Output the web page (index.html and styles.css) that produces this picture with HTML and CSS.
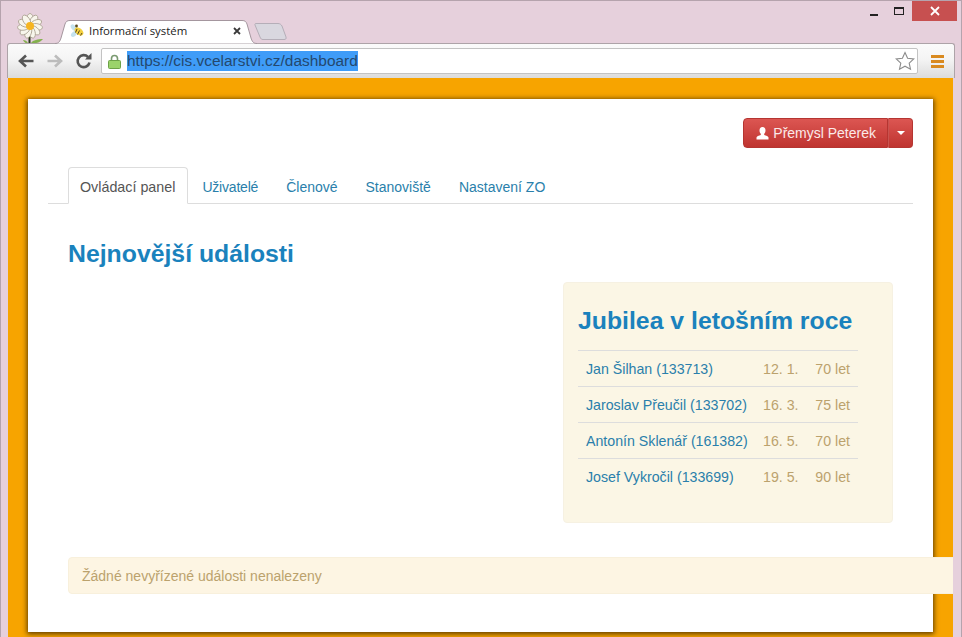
FILE: index.html
```html
<!DOCTYPE html>
<html lang="cs">
<head>
<meta charset="utf-8">
<title>Informační systém</title>
<link rel="stylesheet" href="styles.css">
</head>
<body>
<div class="window">
  <svg class="flower" width="36" height="32" viewBox="0 0 36 32">
    <path d="M17.500 24v8" stroke="#2c3a1c" stroke-width="2"/>
    <path d="M19 32c2-3 7-4 12-4-2 3-7 5-12 4zM16 32c-1-2-3-3-5-3 1 2 3 4 5 3z" fill="#84b04e"/>
    <g fill="#f8f6ec" stroke="#a89f8e" stroke-width=".8">
      <ellipse cx="18" cy="8.500" rx="3.300" ry="6"/>
      <ellipse cx="18" cy="8.500" rx="3.300" ry="6" transform="rotate(33 18 15)"/>
      <ellipse cx="18" cy="8.500" rx="3.300" ry="6" transform="rotate(66 18 15)"/>
      <ellipse cx="18" cy="8.500" rx="3.300" ry="6" transform="rotate(98 18 15)"/>
      <ellipse cx="18" cy="8.500" rx="3.300" ry="6" transform="rotate(131 18 15)"/>
      <ellipse cx="18" cy="8.500" rx="3.300" ry="6" transform="rotate(164 18 15)"/>
      <ellipse cx="18" cy="8.500" rx="3.300" ry="6" transform="rotate(196 18 15)"/>
      <ellipse cx="18" cy="8.500" rx="3.300" ry="6" transform="rotate(229 18 15)"/>
      <ellipse cx="18" cy="8.500" rx="3.300" ry="6" transform="rotate(262 18 15)"/>
      <ellipse cx="18" cy="8.500" rx="3.300" ry="6" transform="rotate(295 18 15)"/>
      <ellipse cx="18" cy="8.500" rx="3.300" ry="6" transform="rotate(328 18 15)"/>
    </g>
    <circle cx="18" cy="15" r="4" fill="#f6b520"/>
  </svg>
  <div class="tabstrip">
    <div class="tab">
      <svg class="tab-shape" width="202" height="24" viewBox="0 0 202 24">
        <path d="M0 23.500C4 23.500 5 21 6 18L10 4C11 1.500 12 .5 15 .5H187C190 .5 191 1.500 192 4L196 18C197 21 198 23.500 202 23.500" fill="#fff" stroke="#a4969e"/>
      </svg>
      <svg class="bee" width="15" height="15" viewBox="0 0 15 15">
        <ellipse cx="3.500" cy="4.500" rx="3.500" ry="2.200" fill="#c4e2ee" transform="rotate(50 3.500 4.500)"/>
        <ellipse cx="4" cy="11" rx="3.500" ry="2.200" fill="#c4e2ee" transform="rotate(-40 4 11)"/>
        <ellipse cx="9" cy="8.500" rx="5" ry="3.400" fill="#f3d040" transform="rotate(40 9 8.500)"/>
        <path d="M7 6l-1.500 3.500M9.500 7.500l-2 4M12 10l-1.500 2.500" stroke="#5a4a20" stroke-width="1"/>
        <circle cx="6.500" cy="3" r="1.400" fill="#5a4a20"/>
      </svg>
      <span class="tab-title">Informační systém</span>
      <svg class="tab-close" width="10" height="10" viewBox="0 0 10 10"><path d="M2 2l6 6M8 2l-6 6" stroke="#3a3a3a" stroke-width="1.800"/></svg>
    </div>
    <svg class="newtab" width="33" height="19" viewBox="0 0 33 19"><path d="M2 1.500H24C26 1.500 27 2.500 28 4L32 15C32.500 17 31.500 17.500 30 17.500H9C7.500 17.500 6.800 17 6 15L1 3C.7 2 1 1.500 2 1.500Z" fill="#d9d7df" stroke="#b5aeb8"/></svg>
    <div class="controls">
      <span class="ctl"><i class="min"></i></span>
      <span class="ctl"><i class="max"></i></span>
      <span class="close"><svg width="10" height="10" viewBox="0 0 10 10"><path d="M1 1l8 8M9 1l-8 8" stroke="#fff" stroke-width="1.800"/></svg></span>
    </div>
  </div>
  <div class="toolbar">
    <svg class="navicon" width="18" height="18" viewBox="0 0 18 18"><path d="M16.500 9H4M9 3.500L3 9l6 5.500" fill="none" stroke="#555" stroke-width="2.600"/></svg>
    <svg class="navicon" width="18" height="18" viewBox="0 0 18 18"><path d="M1.500 9H14M9 3.500L15 9l-6 5.500" fill="none" stroke="#bcbcbc" stroke-width="2.600"/></svg>
    <svg class="navicon" width="18" height="18" viewBox="0 0 18 18"><path d="M14.500 10.500A6 6 0 1 1 13 5" fill="none" stroke="#555" stroke-width="2.600"/><path d="M10 7.500h6.500V1z" fill="#555"/></svg>
    <div class="omnibox">
      <svg class="lock" width="13" height="15" viewBox="0 0 13 15"><path d="M3.500 7V4.500a3 3 0 0 1 6 0V7" fill="none" stroke="#7a9a70" stroke-width="1.600"/><rect x=".5" y="6.500" width="12" height="8" rx="1" fill="#9bd36b" stroke="#6da248"/></svg>
      <span class="url">https://cis.vcelarstvi.cz/dashboard</span>
      <svg class="star" width="20" height="20" viewBox="0 0 20 20"><path d="M10 1.500l2.600 5.700 6.200.7-4.600 4.200 1.300 6.100L10 15.200l-5.500 3 1.300-6.100L1.200 7.900l6.200-.7z" fill="#fff" stroke="#8c8c8c" stroke-width="1.100"/></svg>
    </div>
    <div class="menu"><i></i><i></i><i></i></div>
  </div>
  <div class="viewport">
    <div class="card">
      <div class="userbar">
        <a class="btn btn-main">
          <svg width="13" height="13" viewBox="0 0 13 13"><path d="M6.500 0C4.500 0 3.500 1.500 3.500 3.500c0 1.500.6 2.700 1.300 3.300v1.100C3 8.500.5 9.200.5 10.500V12.500h12v-2c0-1.300-2.500-2-4.300-2.600V6.800C8.900 6.200 9.500 5 9.500 3.500 9.500 1.500 8.500 0 6.500 0z" fill="#fff"/></svg>
          Přemysl Peterek
        </a>
        <a class="btn btn-caret"><i class="caret"></i></a>
      </div>
      <ul class="tabs">
        <li class="active"><a>Ovládací panel</a></li>
        <li class="narrow"><a>Uživatelé</a></li>
        <li><a>Členové</a></li>
        <li><a>Stanoviště</a></li>
        <li><a>Nastavení ZO</a></li>
      </ul>
      <div class="content">
        <h1 class="heading">Nejnovější události</h1>
        <div class="row">
          <section class="panel">
            <h2 class="heading panel-title">Jubilea v letošním roce</h2>
            <table class="jubilee">
              <tr><td class="name">Jan Šilhan (133713)</td><td class="date">12. 1.</td><td class="age">70 let</td></tr>
              <tr><td class="name">Jaroslav Přeučil (133702)</td><td class="date">16. 3.</td><td class="age">75 let</td></tr>
              <tr><td class="name">Antonín Sklenář (161382)</td><td class="date">16. 5.</td><td class="age">70 let</td></tr>
              <tr><td class="name">Josef Vykročil (133699)</td><td class="date">19. 5.</td><td class="age">90 let</td></tr>
            </table>
          </section>
        </div>
        <div class="alert">Žádné nevyřízené události nenalezeny</div>
      </div>
    </div>
  </div>
</div>
</body>
</html>
```
FILE: styles.css
```css
* { box-sizing: border-box; }
html, body { margin: 0; padding: 0; height: 100%; overflow: hidden; }
body { font-family: "Liberation Sans", Arial, sans-serif; font-size: 14px; }

.window {
  position: relative;
  width: 962px;
  height: 637px;
  display: flex;
  flex-direction: column;
  background: #e6d0dc;
  border-top: 1px solid #b5a3ad;
  border-left: 1px solid #b5a3ad;
  border-right: 1px solid #b5a3ad;
}
.flower { position: absolute; left: 11px; top: 10px; z-index: 1; }

.tabstrip { height: 42px; display: flex; align-items: flex-end; flex: none; padding-left: 54px; position: relative; z-index: 2; }
.tab { position: relative; width: 202px; height: 24px; margin-bottom: -1px; display: flex; align-items: center; padding: 0 0 3px 15px; }
.tab-shape { position: absolute; left: 0; top: 0; }
.bee, .tab-title, .tab-close { position: relative; }
.tab-title { margin-left: 4px; font: 11.400px "Open Sans", sans-serif; color: #222; white-space: nowrap; }
.tab-close { margin-left: auto; margin-right: 15px; }
.newtab { margin: 0 0 2px -3px; flex: none; }
.controls { margin-left: auto; align-self: flex-start; display: flex; margin-right: 4px; }
.ctl { width: 21px; height: 20px; display: flex; align-items: center; justify-content: center; }
.ctl + .ctl { margin-left: 4px; }
.ctl .min { width: 8px; height: 2px; background: #222; margin-top: 7px; }
.ctl .max { width: 10px; height: 8px; border: 1px solid #222; border-top-width: 2px; margin-top: -1px; }
.close { width: 45px; height: 20px; background: #c75050; display: flex; align-items: center; justify-content: center; margin-left: 3px; }

.toolbar {
  flex: none;
  height: 35px;
  margin: 0 6px;
  padding: 0 10px 0 9px;
  display: flex;
  align-items: center;
  background: linear-gradient(#fbfbfb, #f4f4f4 45%, #dcdcdc);
  border: 1px solid #ada3a8;
  border-bottom: 0;
  border-radius: 3px 3px 0 0;
}
.navicon { margin-right: 11px; flex: none; }
.omnibox {
  flex: 1;
  height: 26px;
  margin-left: -3px;
  display: flex;
  align-items: center;
  padding: 0 2px 0 6px;
  background: #fff;
  border: 1px solid #c3c3c3;
  border-radius: 2px;
}
.url { margin-left: 6px; padding: 0 0 1px; font-size: 15.450px; line-height: 19px; color: #24486e; background: #3f9cf8; white-space: nowrap; }
.star { margin-left: auto; }
.menu { margin-left: 13px; width: 13px; display: flex; flex-direction: column; gap: 2px; }
.menu i { height: 3px; background: #d98a20; }

.viewport { flex: 1; margin: 0 8px 0 7px; padding: 21px 20px 0; background: #f7a400; overflow: hidden; min-height: 0; }
.card { position: relative; height: 533px; padding: 19px 20px 0; background: #fff; box-shadow: 0 1px 5px 1px #5c3c00; }

.userbar { display: flex; justify-content: flex-end; height: 30px; }
.btn { height: 30px; display: flex; align-items: center; color: #fbe9e8; background: linear-gradient(#dc5652, #bf3430); border: 1px solid #b53531; }
.btn-main { padding: 0 11px 0 12px; gap: 4px; border-radius: 4px 0 0 4px; }
.btn-caret { width: 25px; justify-content: center; border-left: 1px solid #c9534f; border-radius: 0 4px 4px 0; }
.caret { border: 4px solid transparent; border-top-color: #fff; border-bottom: 0; }

.tabs { list-style: none; display: flex; margin: 19px 0 0; padding: 0 0 0 20px; height: 37px; border-bottom: 1px solid #ddd; }
.tabs li { margin-right: 2px; }
.tabs .active { margin-right: 1px; }
.tabs a { display: block; height: 37px; line-height: 20px; padding: 9px 12px; border: 1px solid transparent; border-radius: 4px 4px 0 0; color: #2a7fab; }
.tabs .active a { padding: 9px 12px 9px 11px; font-size: 14.300px; color: #555; background: #fff; border-color: #ddd #ddd #fff; }
.tabs .narrow a { letter-spacing: -.2px; }

.content { padding: 0 20px; }
.heading { margin: 0; font-size: 24.800px; line-height: 30px; font-weight: bold; color: #1a82bd; }
.content > .heading { margin-top: 35px; }
.row { display: flex; justify-content: flex-end; margin-top: 13px; }
.panel { width: 330px; height: 241px; padding: 23px 14px 0; background: #fbf6e5; border: 1px solid #f6f1e2; border-radius: 4px; }
.panel-title { white-space: nowrap; }
.jubilee { width: 280px; margin-top: 14px; border-collapse: collapse; table-layout: fixed; }
.jubilee td { height: 36px; padding: 0 8px; border-top: 1px solid #ddd; white-space: nowrap; font-size: 14.200px; }
.jubilee .name { width: 177px; color: #2a7fab; }
.jubilee .date { width: 52px; color: #bba26d; }
.jubilee .age { color: #bba26d; text-align: right; }

.alert { margin: 34px -70px 0 0; height: 37px; padding: 0 13px; display: flex; align-items: center; color: #bba26d; background: #fdf5e3; border: 1px solid #f8f0dc; border-radius: 4px; }
```
